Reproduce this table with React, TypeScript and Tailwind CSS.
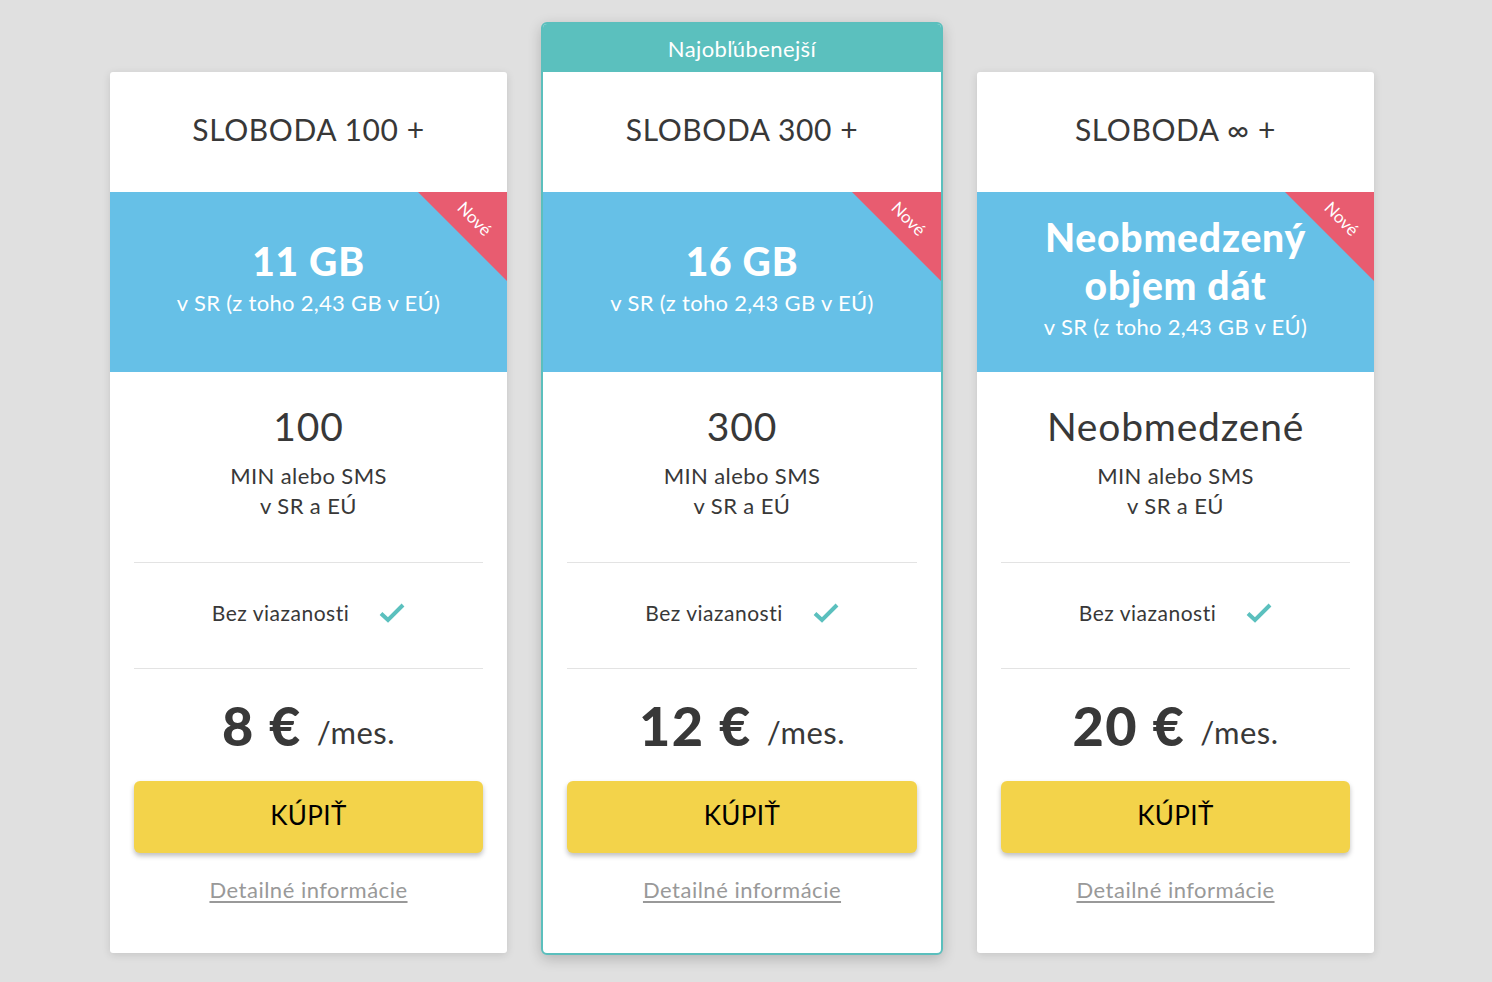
import React from "react";

interface Plan {
  name: string;
  data: string[];
  minutes: string;
  price: string;
  popular?: boolean;
}

const plans: Plan[] = [
  { name: "SLOBODA 100 +", data: ["11 GB"], minutes: "100", price: "8 €" },
  { name: "SLOBODA 300 +", data: ["16 GB"], minutes: "300", price: "12 €", popular: true },
  { name: "SLOBODA ∞ +", data: ["Neobmedzený", "objem dát"], minutes: "Neobmedzené", price: "20 €" },
];

const Check = () => (
  <svg width="26" height="20" viewBox="0 0 26 20" fill="none">
    <path d="M2 10.5 L9 17 L24 2" stroke="#5bc0be" strokeWidth="4" strokeLinecap="butt" strokeLinejoin="miter" />
  </svg>
);

const CardBody = ({ plan }: { plan: Plan }) => (
  <>
    {/* title */}
    <div className="h-[120px] pb-[6px] flex items-center justify-center">
      <h2 className="text-[30px] text-[#383838] tracking-[0.6px]">{plan.name}</h2>
    </div>

    {/* data band */}
    <div className="relative h-[180px] pb-[10px] bg-[#66c0e7] flex flex-col items-center justify-center text-white overflow-hidden">
      <div className="absolute top-0 right-0 w-[89px] h-[89px] bg-[#e85c70] [clip-path:polygon(0_0,100%_0,100%_100%)]" />
      <span className="absolute top-[18px] right-[12px] rotate-45 text-[17px] leading-none">Nové</span>
      {plan.data.map((d) => (
        <div key={d} className="text-[39px] font-black leading-[48px] tracking-[0.8px]">
          {d}
        </div>
      ))}
      <div className="text-[22px] leading-[30px] mt-[3px] tracking-[0.3px]">v SR (z toho 2,43 GB v EÚ)</div>
    </div>

    {/* minutes */}
    <div className="pt-[26px] h-[190px] flex flex-col items-center text-[#383838]">
      <div className="text-[39px] leading-[56px] tracking-[0.8px]">{plan.minutes}</div>
      <div className="text-[22px] leading-[30px] mt-[7px] tracking-[0.4px]">MIN alebo SMS</div>
      <div className="text-[22px] leading-[30px] tracking-[0.4px]">v SR a EÚ</div>
    </div>

    <div className="mx-6 border-t border-[#e3e3e3]" />
    <div className="h-[105px] pb-[5px] flex items-center justify-center gap-[30px] text-[21px] text-[#383838]">
      <span className="tracking-[0.5px]">Bez viazanosti</span>
      <Check />
    </div>
    <div className="mx-6 border-t border-[#e3e3e3]" />

    {/* price */}
    <div className="h-[112px] flex items-center justify-center gap-[15px] text-[#383838]">
      <span className="text-[54px] font-black tracking-[1.5px]">{plan.price}</span>
      <span className="text-[31px] mt-[14px] tracking-[0.5px]">/mes.</span>
    </div>

    <div className="px-6">
      <button className="w-full h-[72px] pb-1 rounded-[6px] bg-[#f3d34a] shadow-[0_3px_5px_rgba(0,0,0,0.25)] text-[26px] text-black tracking-[0.4px]">
        KÚPIŤ
      </button>
    </div>
    <div className="pt-[20px] pb-[47px] text-center">
      <a className="text-[22px] text-[#999] underline underline-offset-[3px] decoration-[#999] tracking-[0.5px]">
        Detailné informácie
      </a>
    </div>
  </>
);

export default function App() {
  return (
    <div
      className="min-h-[982px] bg-[#e0e0e0] flex justify-center items-start gap-[34px] pt-[22px] pr-2"
      style={{ fontFamily: "Lato, 'Noto Sans', sans-serif" }}
    >
      {plans.map((plan) =>
        plan.popular ? (
          <div
            key={plan.name}
            className="w-[402px] bg-white border-2 border-[#5bbfbd] rounded-[6px] overflow-hidden shadow-[0_4px_14px_rgba(0,0,0,0.2)]"
          >
            <div className="h-[48px] flex items-center justify-center bg-[#5bc0be] text-white text-[22px] tracking-[0.4px]">
              Najobľúbenejší
            </div>
            <CardBody plan={plan} />
          </div>
        ) : (
          <div
            key={plan.name}
            className="w-[397px] mt-[50px] bg-white rounded-[3px] overflow-hidden shadow-[0_2px_8px_rgba(0,0,0,0.12)]"
          >
            <CardBody plan={plan} />
          </div>
        )
      )}
    </div>
  );
}
